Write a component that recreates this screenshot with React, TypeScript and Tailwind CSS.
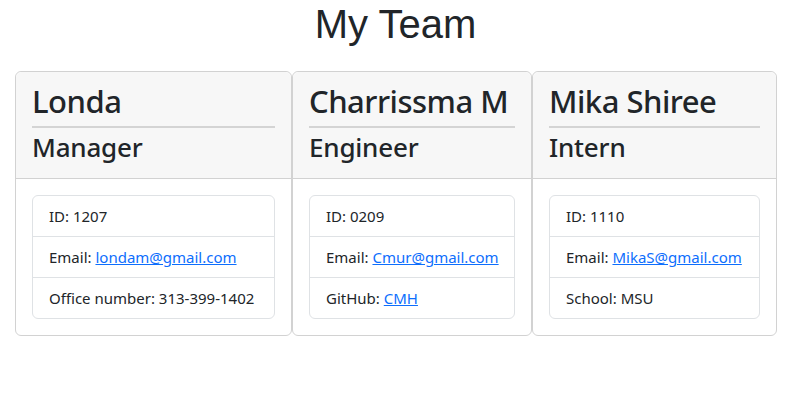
import type { ReactNode } from 'react'

type Member = {
    name: string
    role: string
    width: string
    rows: ReactNode[]
}

const mail = (addr: string) => (
    <a href={`mailto:${addr}`} className="text-[#0d6efd] underline">
        {addr}
    </a>
)

const team: Member[] = [
    {
        name: 'Londa',
        role: 'Manager',
        width: 'w-[277px]',
        rows: [
            'ID: 1207',
            <>Email: {mail('londam@gmail.com')}</>,
            'Office number: 313-399-1402',
        ],
    },
    {
        name: 'Charrissma M',
        role: 'Engineer',
        width: 'w-[240px]',
        rows: [
            'ID: 0209',
            <>Email: {mail('Cmur@gmail.com')}</>,
            <>
                GitHub:{' '}
                <a href="#" className="text-[#0d6efd] underline">
                    CMH
                </a>
            </>,
        ],
    },
    {
        name: 'Mika Shiree',
        role: 'Intern',
        width: 'w-[245px]',
        rows: [
            'ID: 1110',
            <>Email: {mail('MikaS@gmail.com')}</>,
            'School: MSU',
        ],
    },
]

function Card({ m }: { m: Member }) {
    return (
        <div className={`${m.width} shrink-0 border border-[#d2d2d2] rounded-[6px] bg-white`}>
            {/* header */}
            <div className="bg-[#f7f7f7] border-b border-[#d2d2d2] rounded-t-[6px] px-4 pt-[10px] pb-[14px]">
                <h2 className="text-[31px] leading-[38px] font-medium tracking-[-0.5px] whitespace-nowrap">
                    {m.name}
                </h2>
                <div className="h-[2px] bg-[#d4d4d4] mt-[6px] mb-[2px]" />
                <h3 className="text-[26px] leading-[34px] font-medium tracking-[-0.2px]">{m.role}</h3>
            </div>
            {/* body */}
            <div className="p-4">
                <ul className="border border-[#dfe2e5] rounded-[6px]">
                    {m.rows.map((r, i) => (
                        <li
                            key={i}
                            className={`px-4 py-2 text-[15px] leading-[24px] whitespace-nowrap ${
                                i > 0 ? 'border-t border-[#dfe2e5]' : ''
                            }`}>
                            {r}
                        </li>
                    ))}
                </ul>
            </div>
        </div>
    )
}

export default function App() {
    return (
        <div className="w-[791px] bg-white text-[#212529] font-['Noto_Sans',sans-serif]">
            <h1 className="text-center text-[40px] leading-[48px] font-['Liberation_Sans',Arial,sans-serif] mb-[23px]">
                My Team
            </h1>
            <div className="flex pl-[15px]">
                {team.map((m) => (
                    <Card key={m.name} m={m} />
                ))}
            </div>
        </div>
    )
}
